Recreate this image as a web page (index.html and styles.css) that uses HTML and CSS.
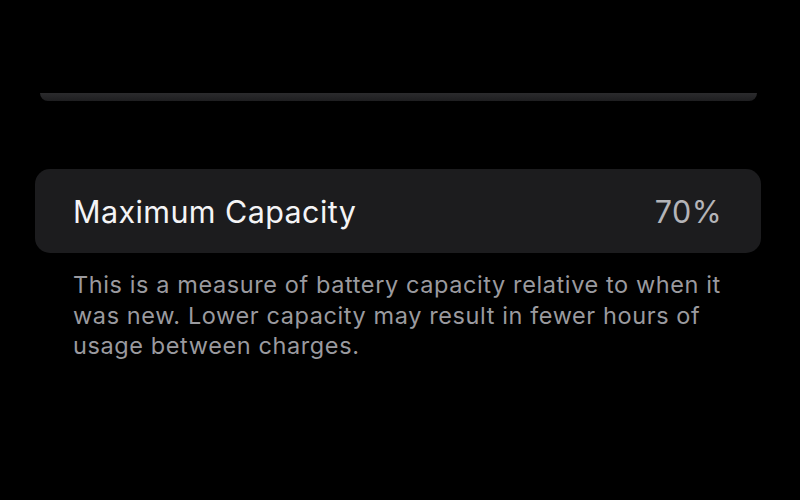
FILE: index.html
```html
<!DOCTYPE html>
<html lang="en">
<head>
<meta charset="utf-8">
<title>Battery Health</title>
<link rel="stylesheet" href="styles.css">
</head>
<body>
  <main class="settings">
    <div class="group-end"></div>
    <section class="group">
      <div class="row">
        <span class="row-label">Maximum Capacity</span>
        <span class="row-value">70%</span>
      </div>
    </section>
    <p class="footnote">This is a measure of battery capacity relative to when it was new. Lower capacity may result in fewer hours of usage between charges.</p>
  </main>
</body>
</html>
```
FILE: styles.css
```css
html, body {
  margin: 0;
  height: 100%;
  background: #000;
}

body {
  font-family: "Inter", "Noto Sans", sans-serif;
  -webkit-font-smoothing: antialiased;
}

.settings {
  display: flex;
  flex-direction: column;
  padding: 93px 39px 0 35px;
}

/* bottom edge of the previous grouped list */
.group-end {
  height: 8px;
  margin: 0 4px 0 5px;
  background: linear-gradient(#2b2b2d, #1e1e20);
  border-radius: 0 0 8px 8px;
}

.group {
  margin-top: 68px;
  background: #1c1c1e;
  border-radius: 15px;
}

.row {
  height: 84px;
  display: flex;
  align-items: center;
  justify-content: space-between;
  padding: 0 39px 0 38px;
}

.row-label {
  color: #f4f4f6;
  font-size: 30.5px;
  letter-spacing: 0.4px;
}

.row-value {
  color: #b4b4b8;
  font-size: 30.5px;
  letter-spacing: 0.4px;
}

.footnote {
  margin: 17px 0 0;
  padding: 0 20px 0 38px;
  color: #9a9a9f;
  font-size: 23.5px;
  letter-spacing: 0.6px;
  line-height: 30.5px;
}
```
